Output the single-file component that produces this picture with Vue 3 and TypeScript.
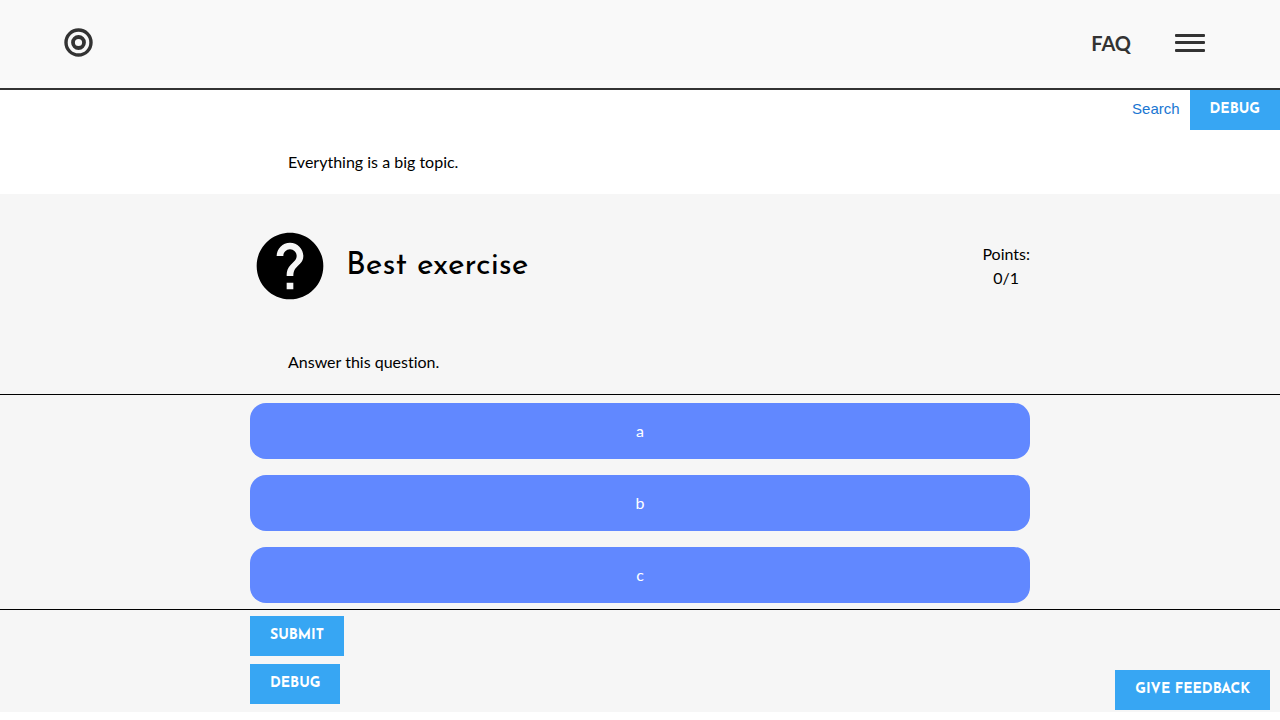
<script setup lang="ts">
import { ref } from 'vue'

const options: string[] = ['a', 'b', 'c']
const selected = ref<string | null>(null)
</script>

<template>
  <div class="page">
    <header class="header">
      <a class="logo" href="#" aria-label="Home">
        <svg viewBox="0 0 30 30" width="30" height="30" fill="none" stroke="#333">
          <circle cx="15.5" cy="14.5" r="12.5" stroke-width="3.4" />
          <circle cx="15.5" cy="14.5" r="5.5" stroke-width="3.8" />
        </svg>
      </a>
      <nav class="nav">
        <a class="faq" href="#faq">FAQ</a>
        <button class="menu" type="button" aria-label="Menu">
          <span class="bar"></span>
          <span class="bar"></span>
          <span class="bar"></span>
        </button>
      </nav>
    </header>

    <div class="tools">
      <button class="search" type="button">Search</button>
      <button class="btn" type="button">DEBUG</button>
    </div>

    <main>
      <p class="text">Everything is a big topic.</p>

      <section class="exercise">
        <div class="title-row">
          <svg class="help" viewBox="0 0 24 24" width="80" height="80" aria-hidden="true">
            <path
              d="M12 2C6.48 2 2 6.48 2 12s4.48 10 10 10 10-4.48 10-10S17.52 2 12 2zm1 17h-2v-2h2v2zm2.07-7.75l-.9.92C13.45 12.9 13 13.5 13 15h-2v-.5c0-1.1.45-2.1 1.17-2.83l1.24-1.26c.37-.36.59-.86.59-1.41 0-1.1-.9-2-2-2s-2 .9-2 2H8c0-2.21 1.79-4 4-4s4 1.79 4 4c0 .88-.36 1.68-.93 2.25z"
            />
          </svg>
          <h2>Best exercise</h2>
          <div class="points">Points:<br />0/1</div>
        </div>

        <p class="text">Answer this question.</p>

        <div class="options">
          <button
            v-for="option in options"
            :key="option"
            class="option"
            type="button"
            :aria-pressed="selected === option"
            @click="selected = option"
          >
            {{ option }}
          </button>
        </div>

        <div class="actions">
          <button class="btn" type="button">SUBMIT</button>
          <button class="btn" type="button">DEBUG</button>
        </div>
      </section>
    </main>

    <button class="btn feedback" type="button">GIVE FEEDBACK</button>
  </div>
</template>

<style>
body {
  margin: 0;
  background: #fff;
}
</style>

<style scoped>
.page {
  font-family: Lato, sans-serif;
  font-size: 16px;
  line-height: 24px;
  font-variant-ligatures: none;
  color: #000;
}

button {
  border: 0;
  margin: 0;
  cursor: pointer;
}

.header {
  display: flex;
  align-items: center;
  justify-content: space-between;
  box-sizing: border-box;
  height: 90px;
  padding: 0 75px 3px 63px;
  background: #f9f9f9;
  border-bottom: 2px solid #333;
}

.logo,
.logo svg {
  display: block;
}

.nav {
  display: flex;
  align-items: center;
  gap: 44px;
}

.faq {
  padding-top: 1px;
  color: #333;
  font-size: 20px;
  font-weight: 700;
  text-decoration: none;
}

.menu {
  display: flex;
  flex-direction: column;
  justify-content: space-between;
  width: 30px;
  height: 18px;
  padding: 0;
  background: none;
}

.bar {
  height: 3px;
  border-radius: 1px;
  background: #333;
}

.tools {
  display: flex;
  justify-content: flex-end;
  height: 40px;
}

.search {
  padding: 0 10px 3px;
  background: none;
  color: #1976d2;
  font-family: "Liberation Sans", Arial, sans-serif;
  font-size: 15px;
}

.btn {
  height: 40px;
  padding: 0 20px 2px;
  background: #37a6f3;
  color: #fff;
  font-family: "Josefin Sans", Lato, sans-serif;
  font-size: 14px;
  font-weight: 700;
}

.text {
  max-width: 704px;
  margin: 0 auto;
  padding: 20px 0;
}

.exercise {
  background: #f6f6f6;
}

.title-row {
  display: flex;
  align-items: center;
  max-width: 780px;
  margin: 0 auto;
  padding: 32px 0 24px;
}

.help {
  flex: none;
}

h2 {
  flex: 1;
  margin: 0 0 0 16px;
  font-family: "Josefin Sans", Lato, sans-serif;
  font-size: 32px;
  font-weight: 400;
  line-height: 40px;
}

.points {
  text-align: center;
}

.options {
  display: flex;
  flex-direction: column;
  align-items: center;
  gap: 16px;
  padding: 8px 0 6px;
  border-top: 1px solid #000;
  border-bottom: 1px solid #000;
}

.option {
  width: 100%;
  max-width: 780px;
  height: 56px;
  padding: 0 6px 2px;
  border-radius: 16px;
  background: #6188ff;
  color: #fff;
  font-family: inherit;
  font-size: 16px;
}

.actions {
  display: flex;
  flex-direction: column;
  align-items: flex-start;
  gap: 8px;
  max-width: 780px;
  margin: 0 auto;
  padding: 6px 0 8px;
}

.feedback {
  position: fixed;
  right: 10px;
  bottom: 10px;
}
</style>
